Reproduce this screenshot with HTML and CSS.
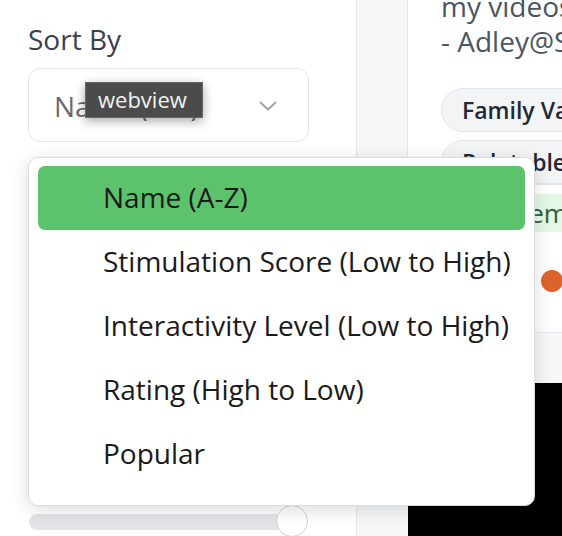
FILE: index.html
```html
<!DOCTYPE html>
<html>
<head>
<meta charset="utf-8">
<link rel="stylesheet" href="styles.css">
</head>
<body>
<div class="layout">
  <aside class="sidebar">
    <div class="label">Sort By</div>
    <div class="select">
      <span class="select-value">Name (A-Z)</span>
      <svg class="chevron" width="18" height="10" viewBox="0 0 18 10"><path d="M1.5 1.5 L9 8.5 L16.5 1.5" fill="none" stroke="#a3a3a3" stroke-width="2" stroke-linecap="round" stroke-linejoin="round"/></svg>
    </div>
    <div class="slider">
      <div class="track"></div>
      <div class="thumb"></div>
    </div>
  </aside>
  <main class="content">
    <section class="card">
      <p class="quote">my videos so much!<br>- Adley@Spacestation</p>
      <div class="pills">
        <span class="pill">Family Values</span>
        <span class="pill">Relatable</span>
      </div>
      <div class="rows">
        <div class="row-green">Premium</div>
        <div class="row-dot"><span class="dot"></span></div>
      </div>
    </section>
    <div class="video"></div>
  </main>
</div>

<div class="tooltip">webview</div>

<ul class="menu">
  <li class="item active">Name (A-Z)</li>
  <li class="item">Stimulation Score (Low to High)</li>
  <li class="item">Interactivity Level (Low to High)</li>
  <li class="item">Rating (High to Low)</li>
  <li class="item">Popular</li>
</ul>
</body>
</html>
```
FILE: styles.css
```css
html, body {
  margin: 0;
  padding: 0;
}
body {
  width: 562px;
  height: 536px;
  overflow: hidden;
  font-family: "Open Sans", "Noto Sans", sans-serif;
  background: #ffffff;
  position: relative;
}
.layout {
  display: flex;
  height: 536px;
}
.sidebar {
  width: 357px;
  flex: none;
  box-sizing: border-box;
  padding: 20px 0 0 28px;
  background: #ffffff;
  border-right: 1px solid #e4e4e6;
  display: flex;
  flex-direction: column;
}
.label {
  font-size: 28px;
  line-height: 38px;
  color: #394150;
}
.select {
  margin-top: 10px;
  width: 281px;
  height: 78px;
  box-sizing: border-box;
  border: 1.5px solid #e4e4e4;
  border-radius: 12px;
  display: flex;
  align-items: center;
  justify-content: space-between;
  padding: 0 31px 0 25px;
}
.select-value {
  font-size: 28px;
  color: #6b6b6b;
  margin-top: 2px;
}
.chevron {
  display: block;
  margin-top: 2px;
}
.slider {
  margin-top: 363px;
  position: relative;
  width: 282px;
  height: 32px;
  display: flex;
  align-items: center;
}
.track {
  width: 272px;
  height: 16px;
  margin-left: 1px;
  margin-top: 2px;
  border-radius: 8px;
  background: #e3e4e8;
}
.thumb {
  position: absolute;
  left: 248px;
  top: 0;
  width: 32px;
  height: 32px;
  box-sizing: border-box;
  border-radius: 50%;
  background: #ffffff;
  border: 1px solid #cfd1d6;
}
.content {
  flex: 1;
  background: #f6f7f9;
  padding-left: 50px;
  display: flex;
  flex-direction: column;
  gap: 50px;
}
.card {
  height: 333px;
  box-sizing: border-box;
  background: #ffffff;
  border-left: 1px solid #e5e7eb;
  border-bottom: 1px solid #e5e7eb;
  padding-left: 33px;
  overflow: hidden;
}
.quote {
  margin: -11px 0 0 0;
  font-size: 28px;
  line-height: 35px;
  color: #4b5563;
  white-space: nowrap;
}
.pills {
  margin-top: 29px;
  display: flex;
  flex-direction: column;
  align-items: flex-start;
  gap: 8px;
}
.pill {
  height: 44px;
  box-sizing: border-box;
  border: 1.5px solid #e3e5e9;
  background: #f3f4f6;
  border-radius: 22px;
  padding: 0 20px;
  display: flex;
  align-items: center;
  font-size: 23px;
  font-weight: 600;
  color: #1f2937;
  white-space: nowrap;
}
.rows {
  margin-left: 92px;
  border-top: 1px solid #e3e5e9;
  padding-top: 9px;
}
.row-green {
  height: 38px;
  background: #e4f8e8;
  font-size: 26px;
  line-height: 38px;
  color: #2d6236;
  text-indent: -30px;
  white-space: nowrap;
  overflow: hidden;
}
.row-dot {
  height: 100px;
  display: flex;
  align-items: center;
  padding-left: 8px;
  padding-bottom: 2px;
  box-sizing: border-box;
}
.dot {
  width: 22px;
  height: 22px;
  border-radius: 50%;
  background: #dd632c;
}
.video {
  flex: 1;
  background: #000000;
  margin-left: 1px;
}
.tooltip {
  position: absolute;
  left: 85px;
  top: 82px;
  width: 118px;
  height: 36px;
  box-sizing: border-box;
  background: #4b4b4b;
  border: 1px solid #676767;
  color: #f2f2f2;
  font-family: "Open Sans", "Noto Sans", sans-serif;
  font-weight: 500;
  font-size: 22px;
  line-height: 32px;
  padding-left: 12px;
  white-space: nowrap;
  box-shadow: 0 3px 10px rgba(0, 0, 0, 0.35);
}
.menu {
  position: absolute;
  left: 28px;
  top: 157px;
  width: 507px;
  height: 349px;
  box-sizing: border-box;
  margin: 0;
  padding: 8px 9px 19px 9px;
  list-style: none;
  background: #ffffff;
  border: 1px solid #dcdcdc;
  border-radius: 10px;
  box-shadow: 0 4px 18px rgba(0, 0, 0, 0.14);
}
.item {
  height: 64px;
  line-height: 62px;
  padding-left: 65px;
  font-size: 28px;
  color: #1a1a1a;
  border-radius: 7px;
  white-space: nowrap;
}
.item.active {
  background: #5dc26c;
}
```
